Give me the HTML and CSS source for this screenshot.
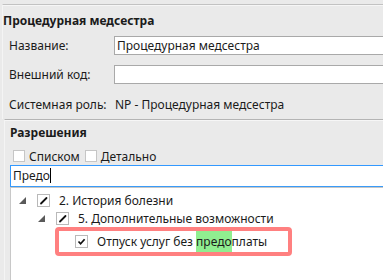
FILE: index.html
```html
<!DOCTYPE html>
<html lang="ru">
<head>
    <meta charset="utf-8">
    <link rel="stylesheet" href="styles.css">
</head>
<body>
    <div class="role-card">
        <div class="role-title">Процедурная медсестра</div>
        <div class="role-form">
            <div class="lbl">Название:</div>
            <div class="field">Процедурная медсестра</div>
            <div class="lbl">Внешний код:</div>
            <div class="field"></div>
            <div class="lbl sys">Системная роль:</div>
            <div class="value">NP - Процедурная медсестра</div>
        </div>
    </div>
    <div class="perm-card">
        <div class="perm-title">Разрешения</div>
        <div class="perm-modes">
            <span class="box"></span><span class="mode">Списком</span>
            <span class="box"></span><span class="mode">Детально</span>
        </div>
        <div class="search">Предо<span class="caret"></span></div>
        <div class="tree">
            <div class="node lvl1">
                <span class="arrow"></span>
                <span class="box"><svg width="11" height="11" viewBox="0 0 11 11"><path d="M3 8.5 L8.5 3" stroke="#111" stroke-width="1.8" stroke-linecap="round"/></svg></span>
                <span class="caption">2. История болезни</span>
            </div>
            <div class="node lvl2">
                <span class="arrow"></span>
                <span class="box"><svg width="11" height="11" viewBox="0 0 11 11"><path d="M3 8.5 L8.5 3" stroke="#111" stroke-width="1.8" stroke-linecap="round"/></svg></span>
                <span class="caption">5. Дополнительные возможности</span>
            </div>
            <div class="node found">
                <span class="box"><svg width="11" height="11" viewBox="0 0 11 11"><path d="M2.5 5.5 L4.6 7.8 L8.6 3.2" fill="none" stroke="#111" stroke-width="1.7"/></svg></span>
                <span class="caption">Отпуск услуг без <mark>предо</mark>платы</span>
            </div>
        </div>
    </div>
</body>
</html>
```

FILE: styles.css
```css
body{
    margin: 0;
    padding: 0;
    width: 383px;
    height: 280px;
    overflow: hidden;
    background-color: #eaeaea;
    font-family: 'Noto Sans', 'Open Sans', sans-serif;
    font-size: 12px;
    color: #1b1b1b;
}
.role-card{
    margin: 4px 0 0 2px;
    border-top: 1px solid #c2c2c2;
    border-left: 1px solid #f4f4f4;
    height: 114px;
    box-shadow: inset 0 1px #f6f6f6;
}
.role-title{
    font-weight: bold;
    padding: 7px 0 0 0;
    height: 18px;
    line-height: 18px;
}
.role-form{
    display: grid;
    grid-template-columns: 105px 280px;
    grid-auto-rows: 19px;
    row-gap: 10px;
    margin-top: 6px;
    padding-left: 6px;
}
.lbl, .value{
    line-height: 19px;
}
.sys, .value{
    margin-top: 1px;
}
.value{
    padding-left: 1px;
}
.field{
    background: #fff;
    border: 1px solid #a9a9a9;
    box-sizing: border-box;
    line-height: 17px;
    padding-left: 2px;
}
.perm-card{
    margin-left: 4px;
    border-top: 1px solid #b4b4b4;
    border-left: 1px solid #f4f4f4;
    box-shadow: inset 0 1px #f6f6f6;
    height: 160px;
}
.perm-title{
    font-weight: bold;
    padding: 4px 0 0 5px;
    line-height: 18px;
}
.perm-modes{
    display: flex;
    align-items: center;
    margin: 7px 0 0 8px;
    height: 14px;
}
.box{
    display: inline-flex;
    align-items: center;
    justify-content: center;
    width: 13px;
    height: 13px;
    box-sizing: border-box;
    border: 1px solid #b9b9b9;
    background: #fff;
}
.perm-modes .box{
    width: 12px;
    height: 12px;
    border-color: #c6c6c6;
}
.mode{
    margin: 0 5px 0 4px;
}
.search{
    margin: 2px -10px 0 5px;
    height: 22px;
    box-sizing: border-box;
    border: 1px solid #3399ff;
    background: #fff;
    line-height: 19px;
    padding-left: 2px;
    border-bottom-color: #3a9bf8;
    box-shadow: 0 1px #c7c7c7;
}
.caret{
    display: inline-block;
    width: 1px;
    height: 15px;
    background: #000;
    vertical-align: -3px;
}
.tree{
    margin: 1px 0 0 5px;
    background: #fff;
    border-left: 1px solid #c8c8c8;
    height: 92px;
    padding-top: 2px;
}
.node{
    display: flex;
    align-items: center;
}
.lvl1{
    height: 20px;
    padding-left: 8px;
}
.lvl2{
    height: 17px;
    padding-left: 27px;
}
.arrow{
    width: 0;
    height: 0;
    border-left: 7px solid transparent;
    border-bottom: 7px solid #5a5a5a;
    margin-right: 11px;
}
.caption{
    margin-left: 9px;
    white-space: nowrap;
}
.found{
    margin-left: 44px;
    width: 213px;
    height: 21px;
    border: 4px solid #ff8080;
    border-radius: 4px;
    padding-left: 16px;
}
mark{
    background: #90ee90;
    color: inherit;
    padding: 2px 0;
}
```
